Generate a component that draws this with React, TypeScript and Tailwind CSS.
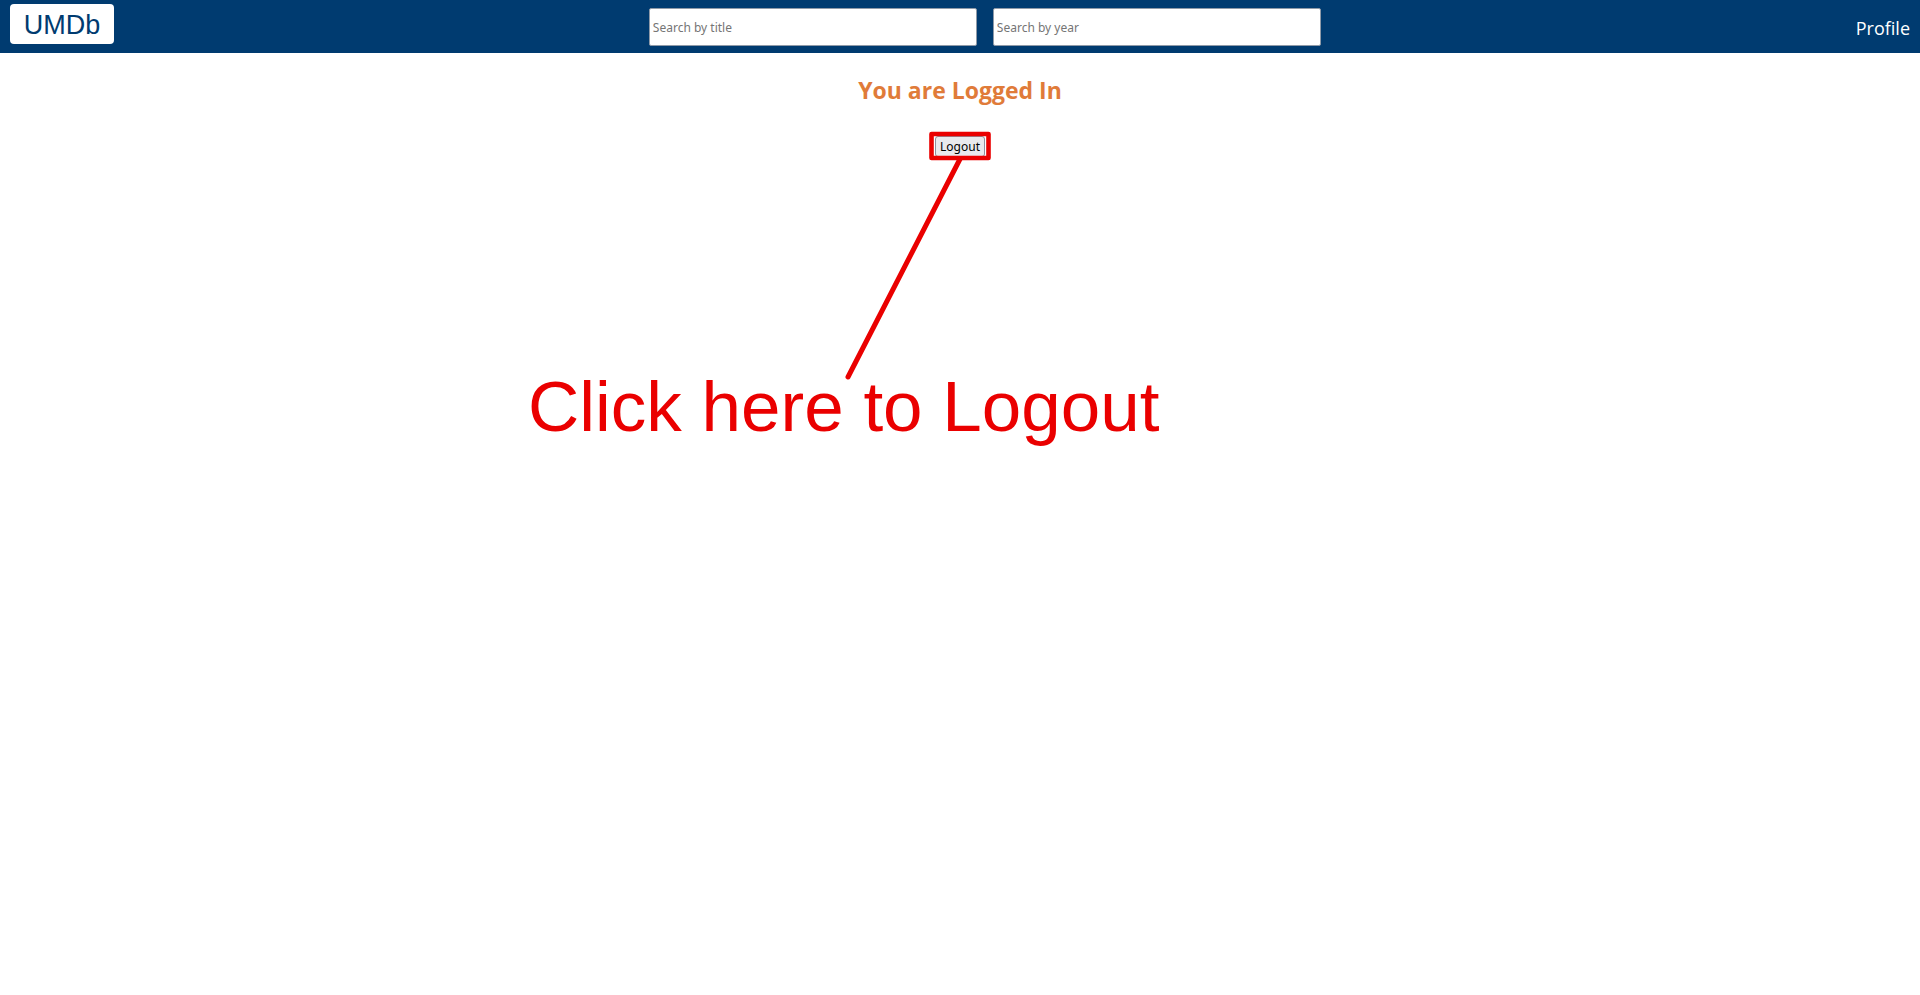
export default function App() {
  return (
    <div className="min-h-screen overflow-x-hidden bg-white font-['Noto_Sans',sans-serif]">
      <header className="flex h-[53px] items-center justify-between bg-[#003b70] px-[10px]">
        <a
          href="#home"
          className="mb-[5px] flex h-10 w-[104px] items-center justify-center rounded bg-white pt-[2px] font-['Liberation_Sans',sans-serif] text-[27px] leading-none text-[#003b70]"
        >
          UMDb
        </a>
        <form className="flex gap-4" role="search">
          <input
            type="text"
            aria-label="Search by title"
            placeholder="Search by title"
            className="h-[38px] w-[328px] rounded-[2px] border border-[#8f9aa8] bg-white px-[3px] pt-[2px] text-[12px] text-black placeholder:text-[#757575]"
          />
          <input
            type="text"
            aria-label="Search by year"
            placeholder="Search by year"
            className="h-[38px] w-[328px] rounded-[2px] border border-[#8f9aa8] bg-white px-[3px] pt-[2px] text-[12px] text-black placeholder:text-[#757575]"
          />
        </form>
        <a href="#profile" className="pt-[2px] font-['Open_Sans',sans-serif] text-[18px] leading-6 text-white">
          Profile
        </a>
      </header>

      <main className="flex flex-col items-center pt-[21px]">
        <h1 className="font-['Open_Sans',sans-serif] text-[23px] leading-8 font-bold text-[#e07b39]">
          You are Logged In
        </h1>
        <div className="relative mt-[30px]">
          <button
            type="button"
            className="flex h-[21px] w-[50px] items-center justify-center rounded-[3px] border border-[#8f8f9d] bg-[#e9e9ed] text-[12px] leading-none text-black"
          >
            Logout
          </button>
          <svg
            className="pointer-events-none absolute -top-[5px] left-1/2 -ml-[120px] h-[260px] w-[152px]"
            viewBox="0 0 152 260"
            fill="none"
            stroke="#ea0000"
            strokeLinejoin="round"
            strokeLinecap="round"
            aria-hidden="true"
          >
            <rect x="91.5" y="3" width="57" height="24" strokeWidth="4.6" />
            <path d="M120 28 L8 246" strokeWidth="5" />
          </svg>
          <p className="pointer-events-none absolute top-[231px] left-1/2 -ml-[432px] font-['Liberation_Sans',sans-serif] text-[71px] leading-[80px] whitespace-nowrap text-[#ea0000]">
            Click here to Logout
          </p>
        </div>
      </main>
    </div>
  );
}
